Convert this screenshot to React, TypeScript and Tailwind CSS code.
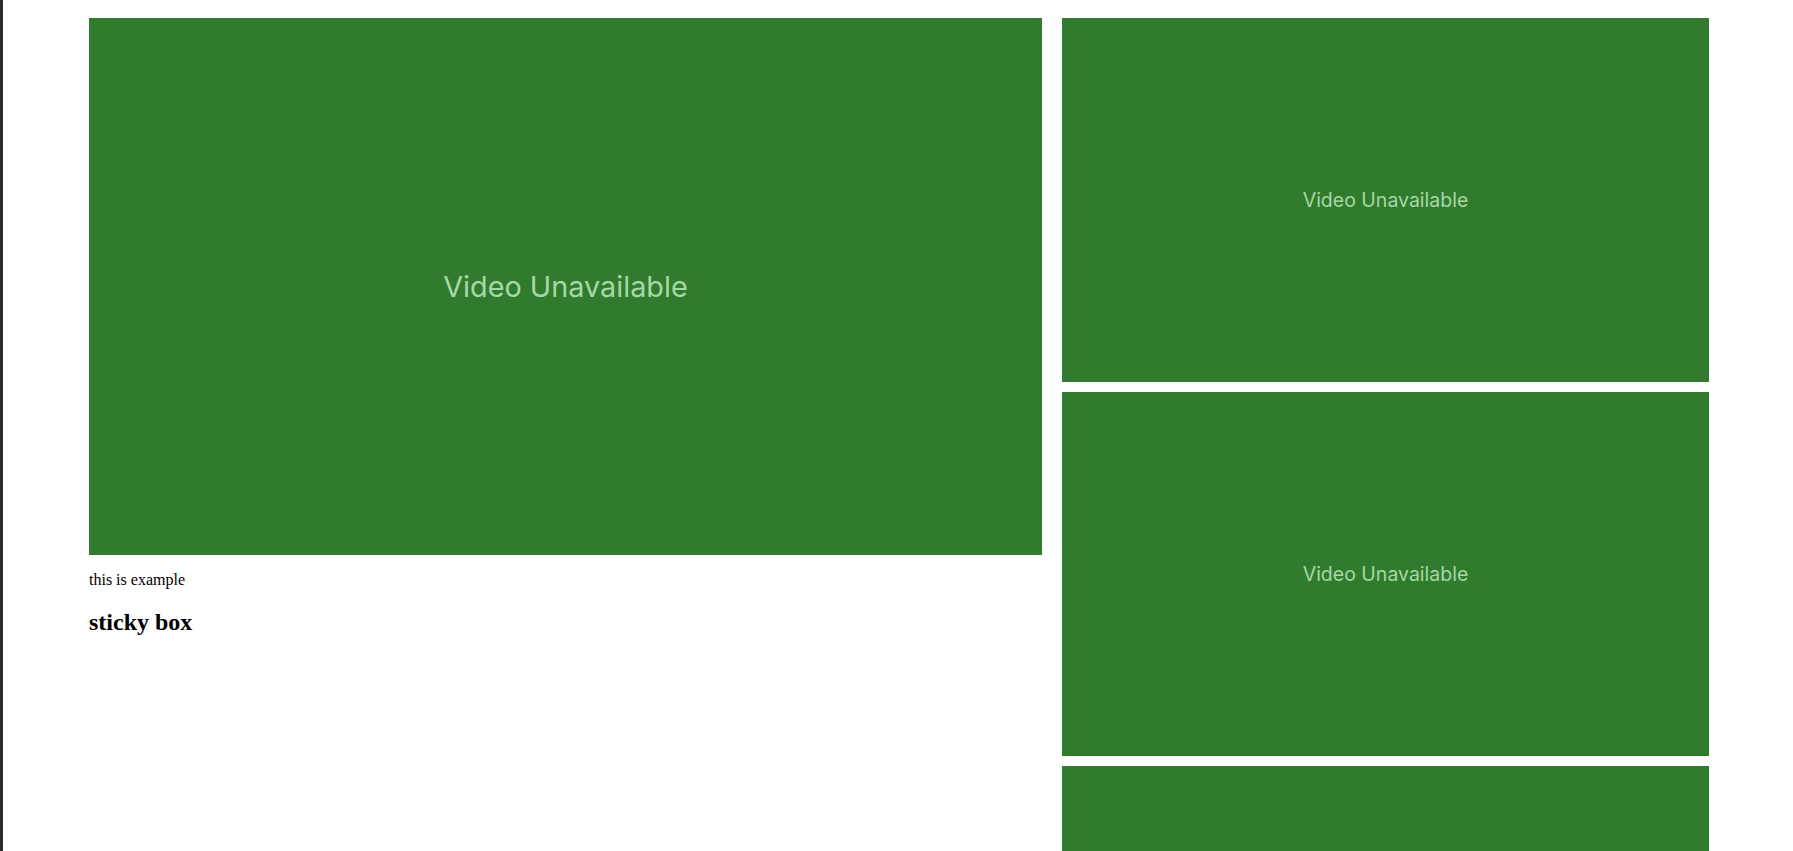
export default function App() {
  return (
    <div className="min-h-[851px] border-l-[3px] border-[#2b2b2b] bg-white">
      <div className="flex gap-[20px] pl-[86px] pt-[18px]">
        {/* main video column */}
        <div className="w-[953px] shrink-0">
          <div className="flex h-[537px] items-center justify-center bg-[#317b2e]">
            <span className="font-['Inter',sans-serif] text-[28.8px] text-[#a6d8a5]">Video Unavailable</span>
          </div>
          <p className="mt-[16px] font-['Liberation_Serif',serif] text-[16px] leading-[18px] text-black">this is example</p>
          <h2 className="mt-[20px] font-['Liberation_Serif',serif] text-[24px] font-bold leading-[27px] text-black">sticky box</h2>
        </div>

        {/* side list */}
        <div className="flex w-[647px] shrink-0 flex-col gap-[10px]">
          {[0, 1, 2].map((i) => (
            <div key={i} className="flex h-[364px] items-center justify-center bg-[#317b2e] pt-[2px]">
              <span className="font-['Inter',sans-serif] text-[19.5px] text-[#a6d8a5]">Video Unavailable</span>
            </div>
          ))}
        </div>
      </div>
    </div>
  )
}
